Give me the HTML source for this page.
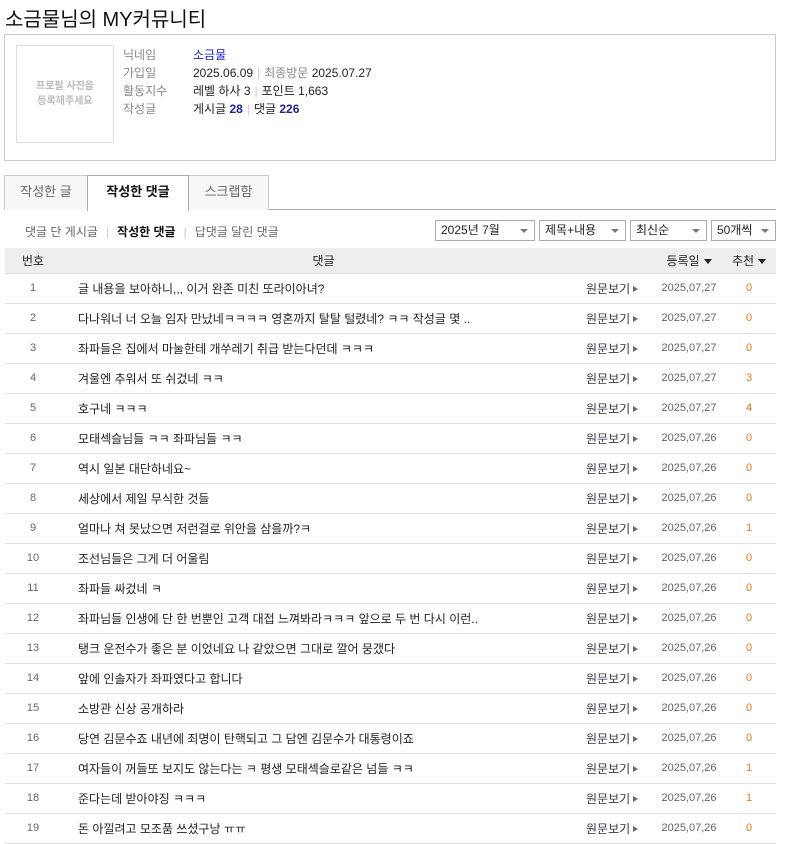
<!DOCTYPE html>
<html><head><meta charset="utf-8"><style>
*{margin:0;padding:0;box-sizing:border-box}
body{width:791px;height:844px;background:#fff;font-family:"Liberation Sans","Noto Sans CJK KR",sans-serif;font-size:12px;color:#222;position:relative;overflow:hidden}
.a{position:absolute;white-space:nowrap}
h1{position:absolute;left:5px;top:3px;font-size:20px;font-weight:normal;color:#111}
.prof{position:absolute;left:4px;top:34px;width:772px;height:127px;border:1px solid #c8c8d8}
.photo{position:absolute;left:11px;top:10px;width:98px;height:98px;border:1px solid #ddd;color:#bbb;font-size:10px;text-align:center;line-height:15px;padding-top:33px;font-weight:bold}
.lab{color:#888}
.sep{color:#ccc;margin:0 4px}
.sep2{color:#ccc;margin:0 8px}
.num{color:#22229a;font-weight:bold}
.tab{position:absolute;top:175px;height:35px;border:1px solid #ccc;border-bottom:none;background:#f7f7f7;color:#666;font-size:13px;text-align:center;line-height:32px}
.sel{position:absolute;top:220px;height:21px;border:1px solid #aaa;font-size:12px;line-height:19px;padding-left:5px;color:#222}
.sel:after{content:"";position:absolute;right:6px;top:8px;border:4px solid transparent;border-top:4px solid #777;border-bottom:0}
table{position:absolute;left:5px;top:248px;width:771px;border-collapse:collapse;table-layout:fixed}
th{background:#eee;height:25px;font-weight:normal;font-size:12px;color:#222;border-bottom:1px solid #ddd}
td{height:30px;border-bottom:1px solid #e2e2e2;font-size:12px;white-space:nowrap;overflow:hidden}
td.n{text-align:center;color:#666;font-size:11px}
td.c{padding-left:17px;color:#222}
td.v{color:#334}
td.d{color:#666;font-size:11px;text-align:center}
td.r{text-align:center;color:#e87a1c;font-size:11px}
.tri{display:inline-block;border:3px solid transparent;border-left:5px solid #667;border-right:0;margin-left:3px;vertical-align:middle}
.dn{display:inline-block;border:4px solid transparent;border-top:5px solid #222;border-bottom:0;margin-left:4px;vertical-align:middle}
</style></head><body>
<h1>소금물님의 MY커뮤니티</h1>
<div class="prof">
<div class="photo">프로필 사진을<br>등록해주세요</div>
<div class="a lab" style="left:118px;top:11px">닉네임</div><div class="a" style="left:188px;top:11px;color:#1a1ae0">소금물</div>
<div class="a lab" style="left:118px;top:29px">가입일</div><div class="a" style="left:188px;top:29px">2025.06.09<span class="sep">|</span><span class="lab">최종방문</span> 2025.07.27</div>
<div class="a lab" style="left:118px;top:47px">활동지수</div><div class="a" style="left:188px;top:47px">레벨 하사 3<span class="sep">|</span>포인트 1,663</div>
<div class="a lab" style="left:118px;top:65px">작성글</div><div class="a" style="left:188px;top:65px">게시글 <span class="num">28</span><span class="sep">|</span>댓글 <span class="num">226</span></div>
</div>
<div class="a" style="left:4px;top:209px;width:772px;border-top:1px solid #aaa"></div>
<div class="tab" style="left:4px;width:84px">작성한 글</div>
<div class="tab" style="left:87px;width:102px;background:#fff;color:#111;font-weight:bold;height:36px;border-color:#aaa;z-index:2">작성한 댓글</div>
<div class="tab" style="left:188px;width:81px">스크랩함</div>
<div class="a" style="left:25px;top:223px;font-size:12px;color:#666">댓글 단 게시글<span class="sep2">|</span><b style="color:#111">작성한 댓글</b><span class="sep2">|</span>답댓글 달린 댓글</div>
<div class="sel" style="left:435px;width:100px">2025년 7월</div>
<div class="sel" style="left:539px;width:87px">제목+내용</div>
<div class="sel" style="left:630px;width:77px">최신순</div>
<div class="sel" style="left:711px;width:65px">50개씩</div>
<table>
<colgroup><col style="width:56px"><col style="width:525px"><col style="width:70px"><col style="width:66px"><col style="width:54px"></colgroup>
<tr><th>번호</th><th>댓글</th><th></th><th>등록일<span class="dn"></span></th><th>추천<span class="dn"></span></th></tr>
<tr><td class="n">1</td><td class="c">글 내용을 보아하니,,, 이거 완존 미친 또라이아녀?</td><td class="v">원문보기<span class="tri"></span></td><td class="d">2025,07,27</td><td class="r">0</td></tr>
<tr><td class="n">2</td><td class="c">다나워너 너 오늘 임자 만났네ㅋㅋㅋㅋ 영혼까지 탈탈 털렸네? ㅋㅋ 작성글 몇 ..</td><td class="v">원문보기<span class="tri"></span></td><td class="d">2025,07,27</td><td class="r">0</td></tr>
<tr><td class="n">3</td><td class="c">좌파들은 집에서 마눌한테 개쑤레기 취급 받는다던데 ㅋㅋㅋ</td><td class="v">원문보기<span class="tri"></span></td><td class="d">2025,07,27</td><td class="r">0</td></tr>
<tr><td class="n">4</td><td class="c">겨울엔 추워서 또 쉬겄네 ㅋㅋ</td><td class="v">원문보기<span class="tri"></span></td><td class="d">2025,07,27</td><td class="r">3</td></tr>
<tr><td class="n">5</td><td class="c">호구네 ㅋㅋㅋ</td><td class="v">원문보기<span class="tri"></span></td><td class="d">2025,07,27</td><td class="r" style="color:#d86a00">4</td></tr>
<tr><td class="n">6</td><td class="c">모태섹슬님들 ㅋㅋ 좌파님들 ㅋㅋ</td><td class="v">원문보기<span class="tri"></span></td><td class="d">2025,07,26</td><td class="r">0</td></tr>
<tr><td class="n">7</td><td class="c">역시 일본 대단하네요~</td><td class="v">원문보기<span class="tri"></span></td><td class="d">2025,07,26</td><td class="r">0</td></tr>
<tr><td class="n">8</td><td class="c">세상에서 제일 무식한 것들</td><td class="v">원문보기<span class="tri"></span></td><td class="d">2025,07,26</td><td class="r">0</td></tr>
<tr><td class="n">9</td><td class="c">얼마나 쳐 못났으면 저런걸로 위안을 삼을까?ㅋ</td><td class="v">원문보기<span class="tri"></span></td><td class="d">2025,07,26</td><td class="r">1</td></tr>
<tr><td class="n">10</td><td class="c">조선님들은 그게 더 어울림</td><td class="v">원문보기<span class="tri"></span></td><td class="d">2025,07,26</td><td class="r">0</td></tr>
<tr><td class="n">11</td><td class="c">좌파들 싸겄네 ㅋ</td><td class="v">원문보기<span class="tri"></span></td><td class="d">2025,07,26</td><td class="r">0</td></tr>
<tr><td class="n">12</td><td class="c">좌파님들 인생에 단 한 번뿐인 고객 대접 느껴봐라ㅋㅋㅋ 앞으로 두 번 다시 이런..</td><td class="v">원문보기<span class="tri"></span></td><td class="d">2025,07,26</td><td class="r">0</td></tr>
<tr><td class="n">13</td><td class="c">탱크 운전수가 좋은 분 이었네요 나 같았으면 그대로 깔어 뭉갰다</td><td class="v">원문보기<span class="tri"></span></td><td class="d">2025,07,26</td><td class="r">0</td></tr>
<tr><td class="n">14</td><td class="c">앞에 인솔자가 좌파였다고 합니다</td><td class="v">원문보기<span class="tri"></span></td><td class="d">2025,07,26</td><td class="r">0</td></tr>
<tr><td class="n">15</td><td class="c">소방관 신상 공개하라</td><td class="v">원문보기<span class="tri"></span></td><td class="d">2025,07,26</td><td class="r">0</td></tr>
<tr><td class="n">16</td><td class="c">당연 김문수죠 내년에 죄명이 탄핵되고 그 담엔 김문수가 대통령이죠</td><td class="v">원문보기<span class="tri"></span></td><td class="d">2025,07,26</td><td class="r">0</td></tr>
<tr><td class="n">17</td><td class="c">여자들이 꺼들또 보지도 않는다는 ㅋ 평생 모태섹슬로같은 넘들 ㅋㅋ</td><td class="v">원문보기<span class="tri"></span></td><td class="d">2025,07,26</td><td class="r">1</td></tr>
<tr><td class="n">18</td><td class="c">준다는데 받아야징 ㅋㅋㅋ</td><td class="v">원문보기<span class="tri"></span></td><td class="d">2025,07,26</td><td class="r">1</td></tr>
<tr><td class="n">19</td><td class="c">돈 아낄려고 모조품 쓰셨구낭 ㅠㅠ</td><td class="v">원문보기<span class="tri"></span></td><td class="d">2025,07,26</td><td class="r">0</td></tr>
</table>
</body></html>
